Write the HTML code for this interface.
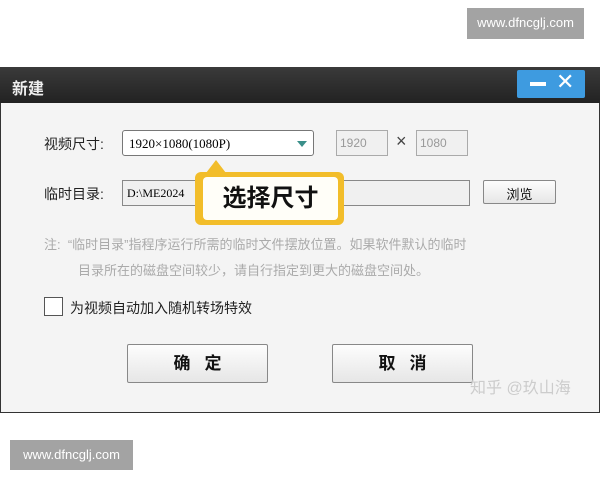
<!DOCTYPE html>
<html><head><meta charset="utf-8"><style>
*{margin:0;padding:0;box-sizing:border-box}
body{width:600px;height:480px;background:#fff;position:relative;overflow:hidden;font-family:"Liberation Sans","Noto Sans CJK SC",sans-serif}
.a{position:absolute}
.wm{background:#a3a3a3;color:#fff;font-size:13px;text-align:center;line-height:30px}
.t{color:#222;font-size:14px}
.box{border:1px solid #aaa;background:#f0f0f0}
.btn{border:1px solid #888;border-radius:2px;background:linear-gradient(#fdfdfd,#e6e6e6);text-align:center;font-weight:bold;font-size:17px;color:#111;letter-spacing:14px;padding-left:14px}
</style></head><body>
<div class="a wm" style="left:467px;top:8px;width:117px;height:31px">www.dfncglj.com</div>
<div class="a" style="left:0;top:67px;width:600px;height:346px;background:#f4f4f4;border:1px solid #333;border-top:none"></div>
<div class="a" style="left:0;top:67px;width:600px;height:36px;background:linear-gradient(#3a3a3a,#222)"></div>
<div class="a" style="left:12px;top:75px;color:#eee;font-size:16px;font-weight:bold">新建</div>
<div class="a" style="left:517px;top:70px;width:68px;height:28px;background:#3e9be0;border-radius:2px"></div>
<div class="a" style="left:530px;top:82px;width:16px;height:4px;background:#fff"></div>
<div class="a" style="left:556px;top:69px;color:#fff;font-size:22px">✕</div>
<div class="a t" style="left:44px;top:134px">视频尺寸:</div>
<div class="a" style="left:122px;top:130px;width:192px;height:26px;border:1px solid #777;border-radius:3px;background:#fff;font-family:'Liberation Serif',serif;font-size:13px;padding:5px 6px">1920×1080(1080P)</div>
<div class="a" style="left:297px;top:141px;width:0;height:0;border-left:5px solid transparent;border-right:5px solid transparent;border-top:6px solid #3a8f8a"></div>
<div class="a box" style="left:336px;top:130px;width:52px;height:26px;color:#999;font-size:12px;padding:5px 3px">1920</div>
<div class="a" style="left:396px;top:131px;color:#444;font-size:18px">×</div>
<div class="a box" style="left:416px;top:130px;width:52px;height:26px;color:#999;font-size:12px;padding:5px 3px">1080</div>
<div class="a t" style="left:44px;top:184px">临时目录:</div>
<div class="a box" style="left:122px;top:180px;width:348px;height:26px;border-color:#888;font-family:'Liberation Serif',serif;font-size:12px;padding:5px 4px">D:\ME2024</div>
<div class="a btn" style="left:483px;top:180px;width:73px;height:24px;font-weight:normal;font-size:13px;letter-spacing:0;padding:3px 0">浏览</div>
<div class="a" style="left:206px;top:160px;width:0;height:0;border-left:10px solid transparent;border-right:10px solid transparent;border-bottom:13px solid #f2bd2a"></div>
<div class="a" style="left:195px;top:172px;width:149px;height:53px;background:#f2bd2a;border-radius:6px"></div>
<div class="a" style="left:203px;top:177px;width:135px;height:43px;background:#fffef8;border-radius:4px;font-size:24px;font-weight:bold;color:#111;text-align:center;line-height:43px">选择尺寸</div>
<div class="a" style="left:44px;top:232px;color:#aaa;font-size:13px;line-height:26px;width:520px">注: &nbsp;“临时目录”指程序运行所需的临时文件摆放位置。如果软件默认的临时<br><span style="padding-left:34px">目录所在的磁盘空间较少，请自行指定到更大的磁盘空间处。</span></div>
<div class="a" style="left:44px;top:297px;width:19px;height:19px;border:1px solid #555;background:#fff"></div>
<div class="a t" style="left:70px;top:298px">为视频自动加入随机转场特效</div>
<div class="a btn" style="left:127px;top:344px;width:141px;height:39px;line-height:37px">确定</div>
<div class="a btn" style="left:332px;top:344px;width:141px;height:39px;line-height:37px">取消</div>
<div class="a" style="left:470px;top:374px;color:#ccc;font-size:16px">知乎 @玖山海</div>
<div class="a wm" style="left:10px;top:440px;width:123px;height:30px">www.dfncglj.com</div>
</body></html>
